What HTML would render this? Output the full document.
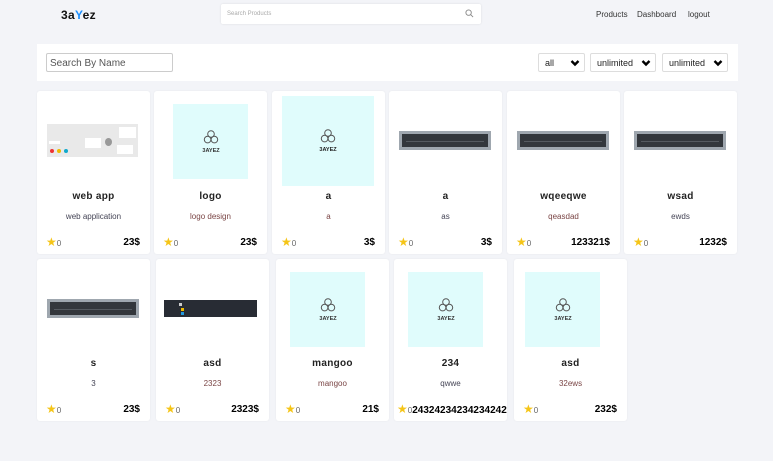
<!DOCTYPE html>
<html><head><meta charset="utf-8"><style>
*{box-sizing:border-box;margin:0;padding:0}
body{width:773px;height:461px;background:#f3f4f8;font-family:"Liberation Sans",sans-serif;position:relative;overflow:hidden}
.abs{position:absolute}
.logo{left:61px;top:8px;font-size:12px;font-weight:bold;color:#111;letter-spacing:.3px}
.logo span{color:#1e90ff}
.search{left:221px;top:4px;width:260px;height:20px;background:#fff;border-radius:2px;box-shadow:0 0 2px rgba(0,0,0,.1)}
.search .ph{position:absolute;left:6px;top:7px;font-size:6px;color:#aaa}
.nav{top:10px;font-size:8px;color:#333}
.bar{left:37px;top:44px;width:701px;height:37px;background:#fff}
.inp{left:46px;top:53px;width:127px;height:19px;border:1px solid #ccc;border-radius:2px;font-size:10px;color:#555;padding:4px 3px 0}
.sel{top:53px;height:19px;border:1px solid #ddd;border-radius:2px;font-size:9px;color:#222;padding:4px 6px;background:#fff}
.sel svg{position:absolute;right:4px;top:5px}
.card{position:absolute;width:113px;background:#fff;border-radius:3px;box-shadow:0 0 2px rgba(0,0,0,.05)}
.t{position:absolute;width:100%;text-align:center;font-size:10px;color:#222;font-weight:bold;letter-spacing:.3px}
.s{position:absolute;width:100%;text-align:center;font-size:8px}
.f{position:absolute;left:9px;right:10px;font-size:8px;color:#666}
.f b{position:absolute;right:0;top:-1px;font-size:10px;color:#000}
.star{color:#f5c518;font-size:12px;line-height:8px}
.img{position:absolute}
.cy{background:#e0fcfc;display:flex;align-items:center;justify-content:center}
.dk{background:#9fa7af;padding:3px}
.dk div{background:#33373c;width:100%;height:100%;position:relative}
.dk div:after{content:"";position:absolute;left:4px;right:4px;top:7px;height:1px;background:#555a60}
</style></head><body>
<div class="abs logo">3a<span>Y</span>ez</div>
<div class="abs search"><div class="ph">Search Products</div>
<svg class="abs" style="left:244px;top:5px" width="9" height="9" viewBox="0 0 10 10"><circle cx="4" cy="4" r="3" fill="none" stroke="#888" stroke-width="1"/><path d="M6.2 6.2L9 9" stroke="#888" stroke-width="1"/></svg></div>
<div class="abs nav" style="left:596px">Products</div>
<div class="abs nav" style="left:637px">Dashboard</div>
<div class="abs nav" style="left:688px">logout</div>
<div class="abs bar"></div>
<div class="abs inp">Search By Name</div>
<div class="abs sel" style="left:538px;width:47px">all<svg width="10" height="8" viewBox="0 0 10 8"><path d="M1.5 2L5 5.5 8.5 2" stroke="#000" stroke-width="2.4" fill="none"/></svg></div>
<div class="abs sel" style="left:590px;width:66px">unlimited<svg width="10" height="8" viewBox="0 0 10 8"><path d="M1.5 2L5 5.5 8.5 2" stroke="#000" stroke-width="2.4" fill="none"/></svg></div>
<div class="abs sel" style="left:662px;width:66px">unlimited<svg width="10" height="8" viewBox="0 0 10 8"><path d="M1.5 2L5 5.5 8.5 2" stroke="#000" stroke-width="2.4" fill="none"/></svg></div>

<svg width="0" height="0" style="position:absolute"><defs><g id="lg"><circle cx="0" cy="-5" r="3.3" fill="none" stroke="#555" stroke-width="1"/><circle cx="-3.4" cy="0.6" r="3.3" fill="none" stroke="#555" stroke-width="1"/><circle cx="3.4" cy="0.6" r="3.3" fill="none" stroke="#555" stroke-width="1"/></g></defs></svg>

<!-- row 1 -->
<div class="card" style="left:37px;top:91px;height:163px">
 <div class="img" style="left:10px;top:33px;width:91px;height:33px;background:#e9e9e9">
  <div class="abs" style="left:2px;top:17px;width:11px;height:3px;background:#fff"></div>
  <div class="abs" style="left:3px;top:25px;width:4px;height:4px;background:#e33;border-radius:50%"></div>
  <div class="abs" style="left:10px;top:25px;width:4px;height:4px;background:#eb0;border-radius:50%"></div>
  <div class="abs" style="left:17px;top:25px;width:4px;height:4px;background:#1ac;border-radius:50%"></div>
  <div class="abs" style="left:38px;top:14px;width:16px;height:10px;background:#fff"></div>
  <div class="abs" style="left:58px;top:14px;width:7px;height:8px;background:#999;border-radius:50%"></div>
  <div class="abs" style="left:72px;top:3px;width:17px;height:11px;background:#fff"></div>
  <div class="abs" style="left:70px;top:21px;width:16px;height:9px;background:#fff"></div>
 </div>
 <div class="t" style="top:100px">web app</div><div class="s" style="top:121px;color:#445">web application</div>
 <div class="f" style="top:147px"><span class="star">★</span>0<b>23$</b></div></div>
<div class="card" style="left:154px;top:91px;height:163px">
 <div class="img cy" style="left:19px;top:13px;width:75px;height:75px"><svg width="40" height="30" viewBox="-20 -12 40 30"><use href="#lg"/><text x="0" y="13" font-size="5.5" font-weight="bold" text-anchor="middle" fill="#333" font-family="Liberation Sans">3AYEZ</text></svg></div>
 <div class="t" style="top:100px">logo</div><div class="s" style="top:121px;color:#7a4545">logo design</div>
 <div class="f" style="top:147px"><span class="star">★</span>0<b>23$</b></div></div>
<div class="card" style="left:272px;top:91px;height:163px">
 <div class="img cy" style="left:10px;top:5px;width:92px;height:90px"><svg width="40" height="30" viewBox="-20 -12 40 30"><use href="#lg"/><text x="0" y="13" font-size="5.5" font-weight="bold" text-anchor="middle" fill="#222" font-family="Liberation Sans">3AYEZ</text></svg></div>
 <div class="t" style="top:100px">a</div><div class="s" style="top:121px;color:#7a4545">a</div>
 <div class="f" style="top:147px"><span class="star">★</span>0<b>3$</b></div></div>
<div class="card" style="left:389px;top:91px;height:163px">
 <div class="img dk" style="left:10px;top:40px;width:92px;height:19px"><div></div></div>
 <div class="t" style="top:100px">a</div><div class="s" style="top:121px;color:#445">as</div>
 <div class="f" style="top:147px"><span class="star">★</span>0<b>3$</b></div></div>
<div class="card" style="left:507px;top:91px;height:163px">
 <div class="img dk" style="left:10px;top:40px;width:92px;height:19px"><div></div></div>
 <div class="t" style="top:100px">wqeeqwe</div><div class="s" style="top:121px;color:#7a4545">qeasdad</div>
 <div class="f" style="top:147px"><span class="star">★</span>0<b>123321$</b></div></div>
<div class="card" style="left:624px;top:91px;height:163px">
 <div class="img dk" style="left:10px;top:40px;width:92px;height:19px"><div></div></div>
 <div class="t" style="top:100px">wsad</div><div class="s" style="top:121px;color:#445">ewds</div>
 <div class="f" style="top:147px"><span class="star">★</span>0<b>1232$</b></div></div>

<!-- row 2 -->
<div class="card" style="left:37px;top:259px;height:162px">
 <div class="img dk" style="left:10px;top:40px;width:92px;height:19px"><div></div></div>
 <div class="t" style="top:99px">s</div><div class="s" style="top:120px;color:#445">3</div>
 <div class="f" style="top:146px"><span class="star">★</span>0<b>23$</b></div></div>
<div class="card" style="left:156px;top:259px;height:162px">
 <div class="img" style="left:8px;top:41px;width:93px;height:17px;background:#282c34">
  <div class="abs" style="left:15px;top:3px;width:3px;height:3px;background:#ccc"></div>
  <div class="abs" style="left:17px;top:8px;width:3px;height:3px;background:#eb0"></div>
  <div class="abs" style="left:17px;top:12px;width:3px;height:3px;background:#29d"></div></div>
 <div class="t" style="top:99px">asd</div><div class="s" style="top:120px;color:#7a4545">2323</div>
 <div class="f" style="top:146px"><span class="star">★</span>0<b>2323$</b></div></div>
<div class="card" style="left:276px;top:259px;height:162px">
 <div class="img cy" style="left:14px;top:13px;width:75px;height:75px"><svg width="40" height="30" viewBox="-20 -12 40 30"><use href="#lg"/><text x="0" y="13" font-size="5.5" font-weight="bold" text-anchor="middle" fill="#333" font-family="Liberation Sans">3AYEZ</text></svg></div>
 <div class="t" style="top:99px">mangoo</div><div class="s" style="top:120px;color:#7a4545">mangoo</div>
 <div class="f" style="top:146px"><span class="star">★</span>0<b>21$</b></div></div>
<div class="card" style="left:394px;top:259px;height:162px;overflow:hidden">
 <div class="img cy" style="left:14px;top:13px;width:75px;height:75px"><svg width="40" height="30" viewBox="-20 -12 40 30"><use href="#lg"/><text x="0" y="13" font-size="5.5" font-weight="bold" text-anchor="middle" fill="#333" font-family="Liberation Sans">3AYEZ</text></svg></div>
 <div class="t" style="top:99px">234</div><div class="s" style="top:120px;color:#445">qwwe</div>
 <div class="f" style="top:146px;left:3px;white-space:nowrap"><span class="star">★</span>0<b style="position:static;font-size:10px">243242342342342423</b></div></div>
<div class="card" style="left:514px;top:259px;height:162px">
 <div class="img cy" style="left:11px;top:13px;width:75px;height:75px"><svg width="40" height="30" viewBox="-20 -12 40 30"><use href="#lg"/><text x="0" y="13" font-size="5.5" font-weight="bold" text-anchor="middle" fill="#333" font-family="Liberation Sans">3AYEZ</text></svg></div>
 <div class="t" style="top:99px">asd</div><div class="s" style="top:120px;color:#7a4545">32ews</div>
 <div class="f" style="top:146px"><span class="star">★</span>0<b>232$</b></div></div>
</body></html>
